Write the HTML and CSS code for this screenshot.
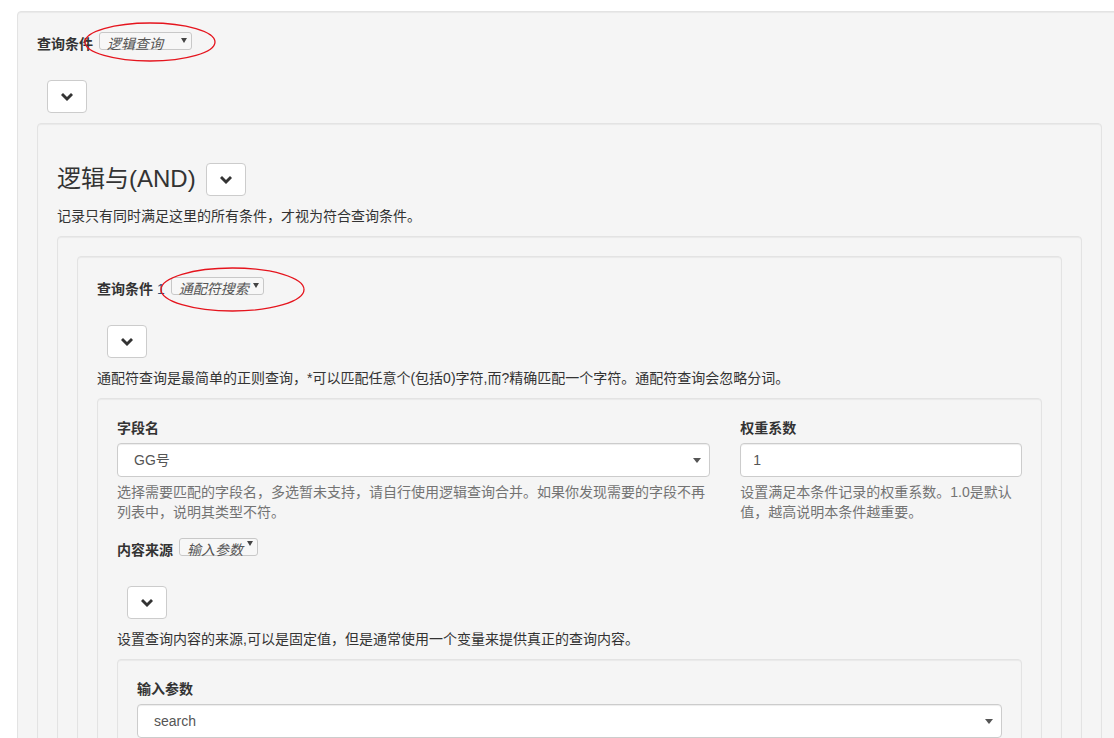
FILE: index.html
```html
<!DOCTYPE html>
<html lang="zh-CN">
<head>
<meta charset="utf-8">
<title>查询条件</title>
<link rel="stylesheet" href="styles.css">
</head>
<body>
<div class="page">
  <div class="well well-outer">
    <div class="cond-head">
      <span class="cond-label">查询条件</span>
      <span class="sel sel-w93">
        <span class="sel-text">逻辑查询</span>
        <span class="sel-arrow"></span>
        <svg class="mark mark-a" width="132" height="40" viewBox="0 0 132 40"><ellipse cx="66" cy="20" rx="65" ry="19"/></svg>
      </span>
    </div>
    <div class="toggle-wrap">
      <button class="btn-toggle" type="button"><svg width="12" height="8" viewBox="0 0 12 8"><polygon points="0,2 2,0 6,4 10,0 12,2 6,8"/></svg></button>
    </div>

    <div class="well">
      <h3 class="group-title">逻辑与(AND)
        <button class="btn-toggle" type="button"><svg width="12" height="8" viewBox="0 0 12 8"><polygon points="0,2 2,0 6,4 10,0 12,2 6,8"/></svg></button>
      </h3>
      <p class="desc">记录只有同时满足这里的所有条件，才视为符合查询条件。</p>

      <div class="well">
        <div class="well">
          <div class="cond-head">
            <span class="cond-label">查询条件 <span class="cond-num">1</span></span>
            <span class="sel sel-w93">
              <span class="sel-text">通配符搜索</span>
              <span class="sel-arrow"></span>
              <svg class="mark mark-b" width="145" height="45" viewBox="0 0 145 45"><ellipse cx="72.5" cy="22.5" rx="71.5" ry="21.5"/></svg>
            </span>
          </div>
          <div class="toggle-wrap">
            <button class="btn-toggle" type="button"><svg width="12" height="8" viewBox="0 0 12 8"><polygon points="0,2 2,0 6,4 10,0 12,2 6,8"/></svg></button>
          </div>
          <p class="desc">通配符查询是最简单的正则查询，*可以匹配任意个(包括0)字符,而?精确匹配一个字符。通配符查询会忽略分词。</p>

          <div class="well">
            <div class="form-row">
              <div class="form-group">
                <label class="field-label">字段名</label>
                <div class="form-control select-control">
                  <span>GG号</span>
                  <span class="caret"></span>
                </div>
                <p class="help">选择需要匹配的字段名，多选暂未支持，请自行使用逻辑查询合并。如果你发现需要的字段不再列表中，说明其类型不符。</p>
              </div>
              <div class="form-group">
                <label class="field-label">权重系数</label>
                <div class="form-control input-control">1</div>
                <p class="help">设置满足本条件记录的权重系数。1.0是默认值，越高说明本条件越重要。</p>
              </div>
            </div>

            <div class="cond-head">
              <span class="cond-label">内容来源</span>
              <span class="sel sel-w79">
                <span class="sel-text">输入参数</span>
                <span class="sel-arrow sel-arrow-high"></span>
              </span>
            </div>
            <div class="toggle-wrap">
              <button class="btn-toggle" type="button"><svg width="12" height="8" viewBox="0 0 12 8"><polygon points="0,2 2,0 6,4 10,0 12,2 6,8"/></svg></button>
            </div>
            <p class="desc">设置查询内容的来源,可以是固定值，但是通常使用一个变量来提供真正的查询内容。</p>

            <div class="well">
              <label class="field-label">输入参数</label>
              <div class="form-control select-control">
                <span>search</span>
                <span class="caret"></span>
              </div>
              <p class="help">&nbsp;</p>
            </div>
          </div>
        </div>
      </div>
    </div>
  </div>
</div>
</body>
</html>
```

FILE: styles.css
```css
html, body {
  margin: 0;
  padding: 0;
  overflow: hidden;
  background: #fff;
}

body {
  font-family: "Liberation Sans", "Noto Sans CJK SC", sans-serif;
  font-size: 14px;
  line-height: 20px;
  color: #333;
}

.page {
  padding: 11px 0 0 17px;
  width: 1105px;
}

.well {
  box-sizing: border-box;
  background: #f5f5f5;
  border: 1px solid #e3e3e3;
  border-radius: 4px;
  padding: 19px;
  margin-bottom: 20px;
  box-shadow: inset 0 1px 1px rgba(0, 0, 0, 0.05);
}

.well-outer {
  width: 1105px;
  min-height: 760px;
}

.cond-head {
  display: flex;
  align-items: flex-start;
  height: 20px;
}

.cond-label {
  font-weight: bold;
  line-height: 20px;
  padding-top: 3px;
  margin-right: 6px;
  white-space: nowrap;
}

.cond-num {
  font-weight: normal;
  color: #2a4f78;
}

.sel {
  position: relative;
  box-sizing: border-box;
  display: flex;
  align-items: flex-start;
  margin-top: 1px;
  height: 18px;
  border: 1px solid #c8c8c8;
  border-radius: 3px;
  background: #f7f7f7;
  padding: 0 4px 0 7px;
  color: #555;
  font-style: italic;
  line-height: 20px;
}

.sel-w93 { width: 93px; }
.sel-w79 { width: 79px; }

.sel-text {
  white-space: nowrap;
  padding-top: 1px;
  font-size: 14px;
}

.sel-arrow {
  margin-left: auto;
  margin-top: 5px;
  width: 0;
  height: 0;
  border-left: 3px solid transparent;
  border-right: 3px solid transparent;
  border-top: 5px solid #444;
}

.sel-arrow-high {
  margin-top: 2px;
}

.mark {
  position: absolute;
  pointer-events: none;
  overflow: visible;
}

.mark ellipse {
  fill: none;
  stroke: #e5141d;
  stroke-width: 1.3;
}

.mark-a { left: -16px; top: -11px; }
.mark-b { left: -12px; top: -11px; }

.toggle-wrap {
  margin-top: 29px;
  padding: 0 0 10px 10px;
}

.btn-toggle {
  box-sizing: border-box;
  display: inline-flex;
  align-items: center;
  justify-content: center;
  width: 40px;
  height: 33px;
  padding: 0;
  background: #fff;
  border: 1px solid #ccc;
  border-radius: 4px;
  vertical-align: top;
}

.btn-toggle svg {
  fill: #333;
  display: block;
}

.group-title {
  display: flex;
  align-items: center;
  height: 33px;
  margin: 20px 0 10px;
  font-size: 24px;
  font-weight: normal;
  line-height: 1.1;
  color: #333;
}

.group-title .btn-toggle {
  margin-left: 10px;
}

.desc {
  margin: 0 0 10px;
}

.form-row {
  display: grid;
  grid-template-columns: calc((100% + 30px) * 8 / 12 - 30px) 1fr;
  column-gap: 30px;
  margin-bottom: 15px;
}

.form-group {
  min-width: 0;
}

.field-label {
  display: block;
  font-weight: bold;
  margin-bottom: 5px;
}

.form-control {
  box-sizing: border-box;
  height: 34px;
  background: #fff;
  border: 1px solid #ccc;
  border-radius: 4px;
  box-shadow: inset 0 1px 1px rgba(0, 0, 0, 0.075);
  color: #555;
  line-height: 20px;
  padding: 6px 12px;
}

.select-control {
  display: flex;
  align-items: center;
  padding: 6px 6px 6px 16px;
}

.caret {
  margin-left: auto;
  margin-right: 2px;
  width: 0;
  height: 0;
  border-left: 4px solid transparent;
  border-right: 4px solid transparent;
  border-top: 5px solid #555;
}

.help {
  margin: 5px 0 0;
  color: #737373;
}
```
